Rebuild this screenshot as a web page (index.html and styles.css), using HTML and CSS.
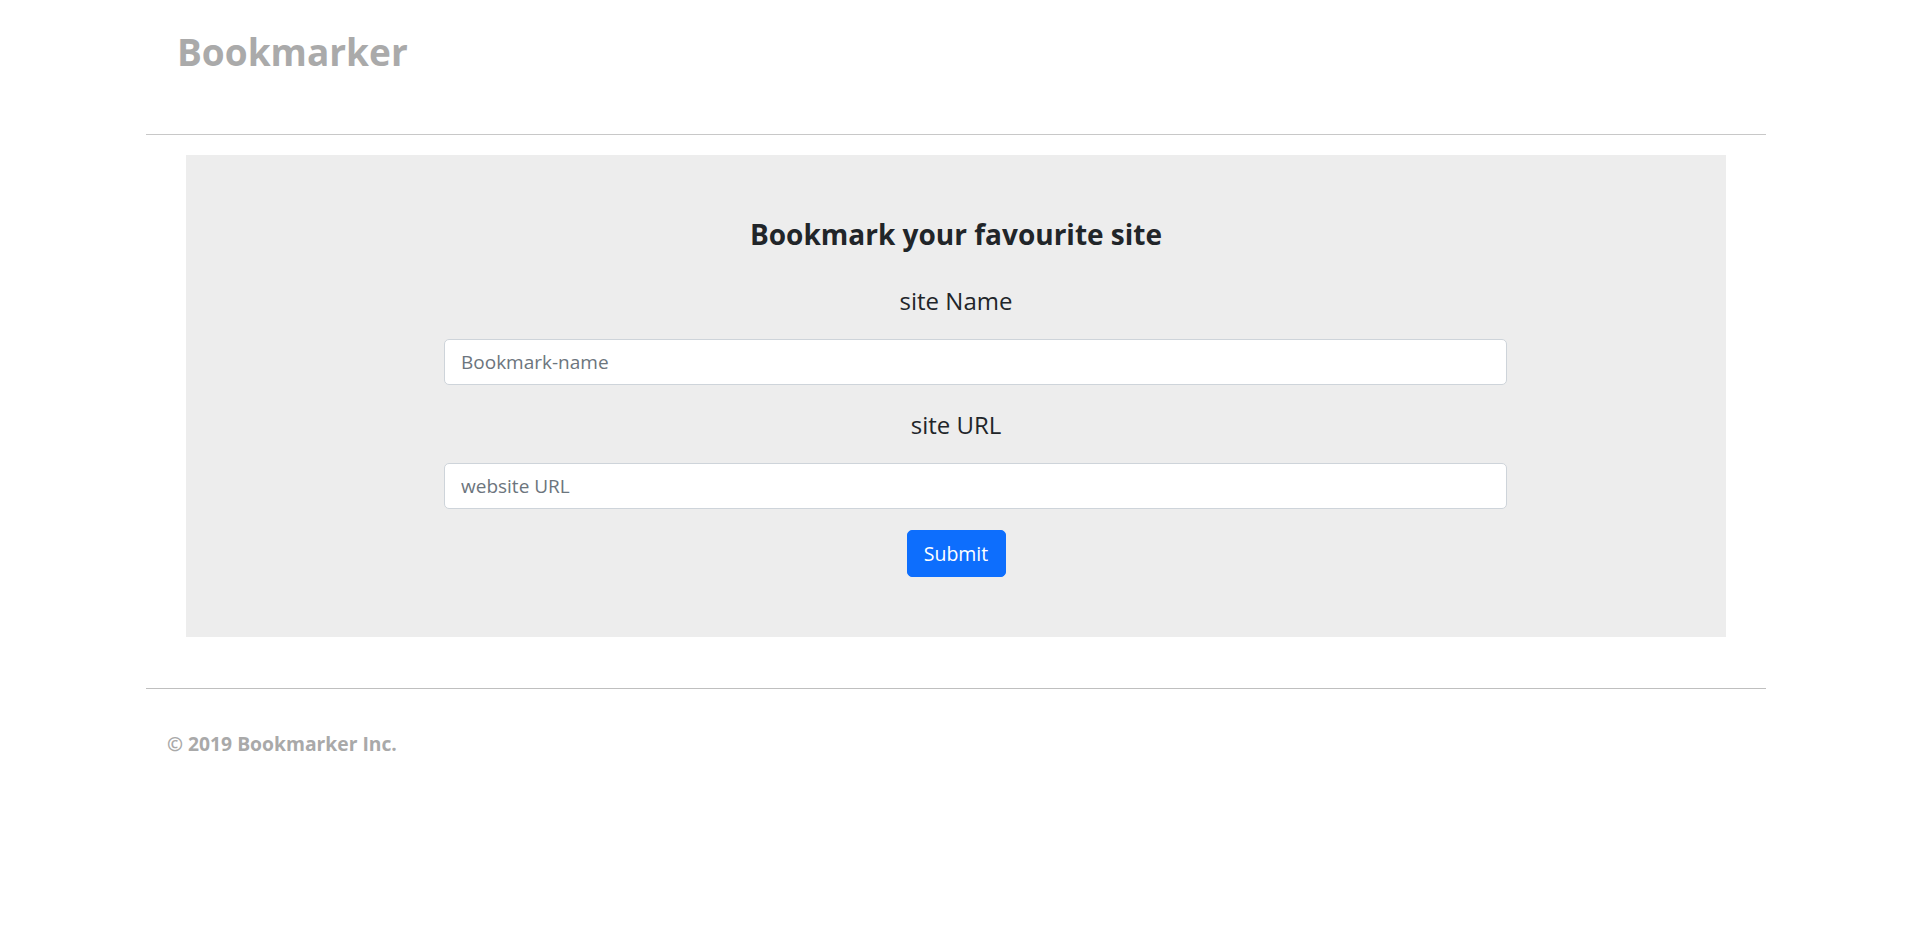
FILE: index.html
```html
<!DOCTYPE html>
<html lang="en">
<head>
<meta charset="utf-8">
<title>Bookmarker</title>
<link rel="stylesheet" href="styles.css">
</head>
<body>
<div class="page">
  <header class="masthead">
    <h1 class="brand">Bookmarker</h1>
  </header>
  <hr class="rule">
  <main class="panel">
    <h2 class="panel-title">Bookmark your favourite site</h2>
    <form class="bm-form" onsubmit="return false">
      <label class="field-label" for="siteName">site Name</label>
      <div class="field-row">
        <input class="field-input" id="siteName" type="text" placeholder="Bookmark-name">
      </div>
      <label class="field-label label-url" for="siteUrl">site URL</label>
      <div class="field-row">
        <input class="field-input" id="siteUrl" type="text" placeholder="website URL">
      </div>
      <div class="actions">
        <button class="btn-submit" type="submit">Submit</button>
      </div>
    </form>
  </main>
  <hr class="rule rule-bottom">
  <footer class="footer">
    <p class="copyright">© 2019 Bookmarker Inc.</p>
  </footer>
</div>
</body>
</html>
```
FILE: styles.css
```css
* { box-sizing: border-box; }
html, body { margin: 0; padding: 0; background: #fff; }
body {
  font-family: "Open Sans", "Noto Sans", sans-serif;
  color: #212529;
}
.page {
  width: 1620px;
  margin-left: 146px;
}
.masthead {
  padding: 28px 0 58px 31px;
}
.brand {
  margin: 0;
  font-size: 37px;
  line-height: 48px;
  font-weight: 700;
  color: #aaaaaa;
}
.rule {
  margin: 0;
  border: 0;
  border-top: 1px solid #c8c8c8;
  height: 0;
}
.rule-bottom { border-top-color: #bfbfbf; }
.panel {
  margin: 20px 40px 51px;
  background: #ededed;
  padding: 62px 0 60px;
}
.panel-title {
  margin: 0;
  text-align: center;
  font-size: 28px;
  line-height: 34px;
  font-weight: 700;
  color: #212529;
}
.bm-form {
  display: flex;
  flex-direction: column;
}
.field-label {
  display: block;
  text-align: center;
  font-size: 24px;
  line-height: 32px;
  margin: 34px 0 22px;
  color: #212529;
}
.label-url { margin-top: 24px; }
.field-row {
  padding: 0 219px 0 258px;
}
.field-input {
  display: block;
  width: 100%;
  height: 46px;
  padding: 0 16px;
  font-family: inherit;
  font-size: 19px;
  color: #212529;
  background: #fff;
  border: 1px solid #ced4da;
  border-radius: 5px;
  outline: none;
}
.field-input::placeholder { color: #6c757d; opacity: 1; }
.actions {
  display: flex;
  justify-content: center;
  margin-top: 21px;
}
.btn-submit {
  width: 99px;
  height: 47px;
  padding: 0;
  font-family: inherit;
  font-size: 19.5px;
  color: #fff;
  background: #0d6efd;
  border: 1px solid #0d6efd;
  border-radius: 5px;
  cursor: pointer;
}
.footer {
  padding: 43px 0 0 21px;
}
.copyright {
  margin: 0;
  font-size: 19.3px;
  line-height: 24px;
  font-weight: 700;
  color: #a9a9a9;
}
```
